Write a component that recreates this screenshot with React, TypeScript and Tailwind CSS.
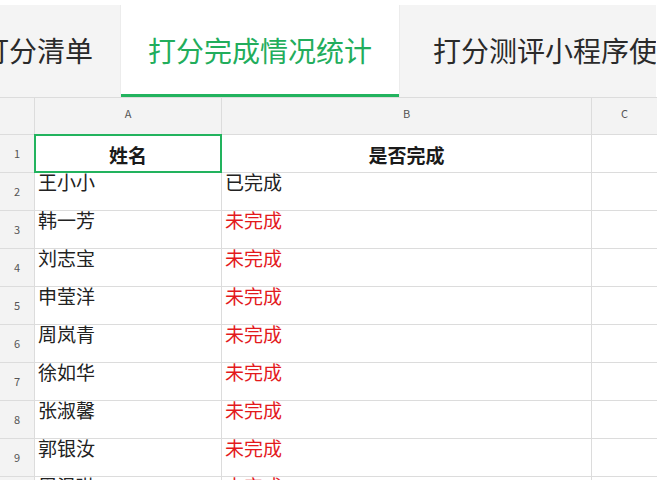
import React from 'react';

const FONT = '"Noto Sans CJK SC", "Noto Sans", sans-serif';

interface Row {
  name: string;
  done: boolean;
}

const rows: Row[] = [
  { name: '王小小', done: true },
  { name: '韩一芳', done: false },
  { name: '刘志宝', done: false },
  { name: '申莹洋', done: false },
  { name: '周岚青', done: false },
  { name: '徐如华', done: false },
  { name: '张淑馨', done: false },
  { name: '郭银汝', done: false },
  { name: '周温琳', done: false },
];

export default function App() {
  return (
    <div className="w-[664px] h-[480px] overflow-hidden bg-white" style={{ fontFamily: FONT }}>
      {/* Tabs */}
      <div className="mt-[5px] w-[656px] h-[92px] flex overflow-hidden">
        <div className="shrink-0 ml-[-46px] pl-[27px] pr-[27px] bg-[#f4f4f4] border-r border-[#ececec] flex items-center pb-[3px]">
          <span className="text-[28px] leading-none text-[#2a2a2a] whitespace-nowrap">打分清单</span>
        </div>
        <div className="shrink-0 w-[278px] bg-white flex flex-col">
          <div className="flex-1 flex items-center justify-center">
            <span className="text-[28px] leading-none text-[#22ad5c] whitespace-nowrap">打分完成情况统计</span>
          </div>
          <div className="h-[3px] bg-[#22b35e]" />
        </div>
        <div className="shrink-0 pl-[33px] pr-[20px] bg-[#f4f4f4] border-l border-[#ececec] flex items-center pb-[3px]">
          <span className="text-[28px] leading-none text-[#2a2a2a] whitespace-nowrap">打分测评小程序使用</span>
        </div>
      </div>

      {/* Sheet */}
      <div className="w-[657px]">
        {/* Column header */}
        <div className="flex h-[38px] border-y border-[#dcdcdc] bg-[#f3f3f3] text-[11px] text-[#555]">
          <div className="w-[35px] shrink-0 border-r border-[#dcdcdc]" />
          <div className="w-[187px] shrink-0 border-r border-[#dcdcdc] flex justify-center pt-[9px] leading-[12px]">A</div>
          <div className="w-[370px] shrink-0 border-r border-[#dcdcdc] flex justify-center pt-[9px] leading-[12px]">B</div>
          <div className="flex-1 flex justify-center pt-[9px] leading-[12px]">C</div>
        </div>

        {/* Row 1 */}
        <div className="flex h-[38px] border-b border-[#dcdcdc]">
          <div className="w-[35px] shrink-0 border-r border-[#dcdcdc] bg-[#f3f3f3] flex items-center justify-center text-[11px] text-[#555]">
            1
          </div>
          <div className="relative w-[187px] shrink-0 border-r border-[#dcdcdc] flex items-center justify-center pt-[2px]">
            <span className="text-[19px] font-bold text-[#1a1a1a] leading-none">姓名</span>
            <div className="absolute left-[-1px] top-[-1px] right-[-1px] bottom-[-1px] border-[2.5px] border-[#22b35e]" />
          </div>
          <div className="w-[370px] shrink-0 border-r border-[#dcdcdc] flex items-center justify-center pt-[2px]">
            <span className="text-[19px] font-bold text-[#1a1a1a] leading-none">是否完成</span>
          </div>
          <div className="flex-1" />
        </div>

        {/* Data rows */}
        {rows.map((r, i) => (
          <div key={i} className="flex h-[38px] border-b border-[#dcdcdc]">
            <div className="w-[35px] shrink-0 border-r border-[#dcdcdc] bg-[#f3f3f3] flex items-center justify-center text-[11px] text-[#555]">
              {i + 2}
            </div>
            <div className="w-[187px] shrink-0 border-r border-[#dcdcdc] pl-[3px] text-[19px] leading-[18px] text-[#222]">
              {r.name}
            </div>
            <div
              className={
                r.done
                  ? 'w-[370px] shrink-0 border-r border-[#dcdcdc] pl-[3px] text-[19px] leading-[18px] text-[#222]'
                  : 'w-[370px] shrink-0 border-r border-[#dcdcdc] pl-[3px] text-[19px] leading-[18px] text-[#e3191c]'
              }
            >
              {r.done ? '已完成' : '未完成'}
            </div>
            <div className="flex-1" />
          </div>
        ))}
      </div>
    </div>
  );
}
